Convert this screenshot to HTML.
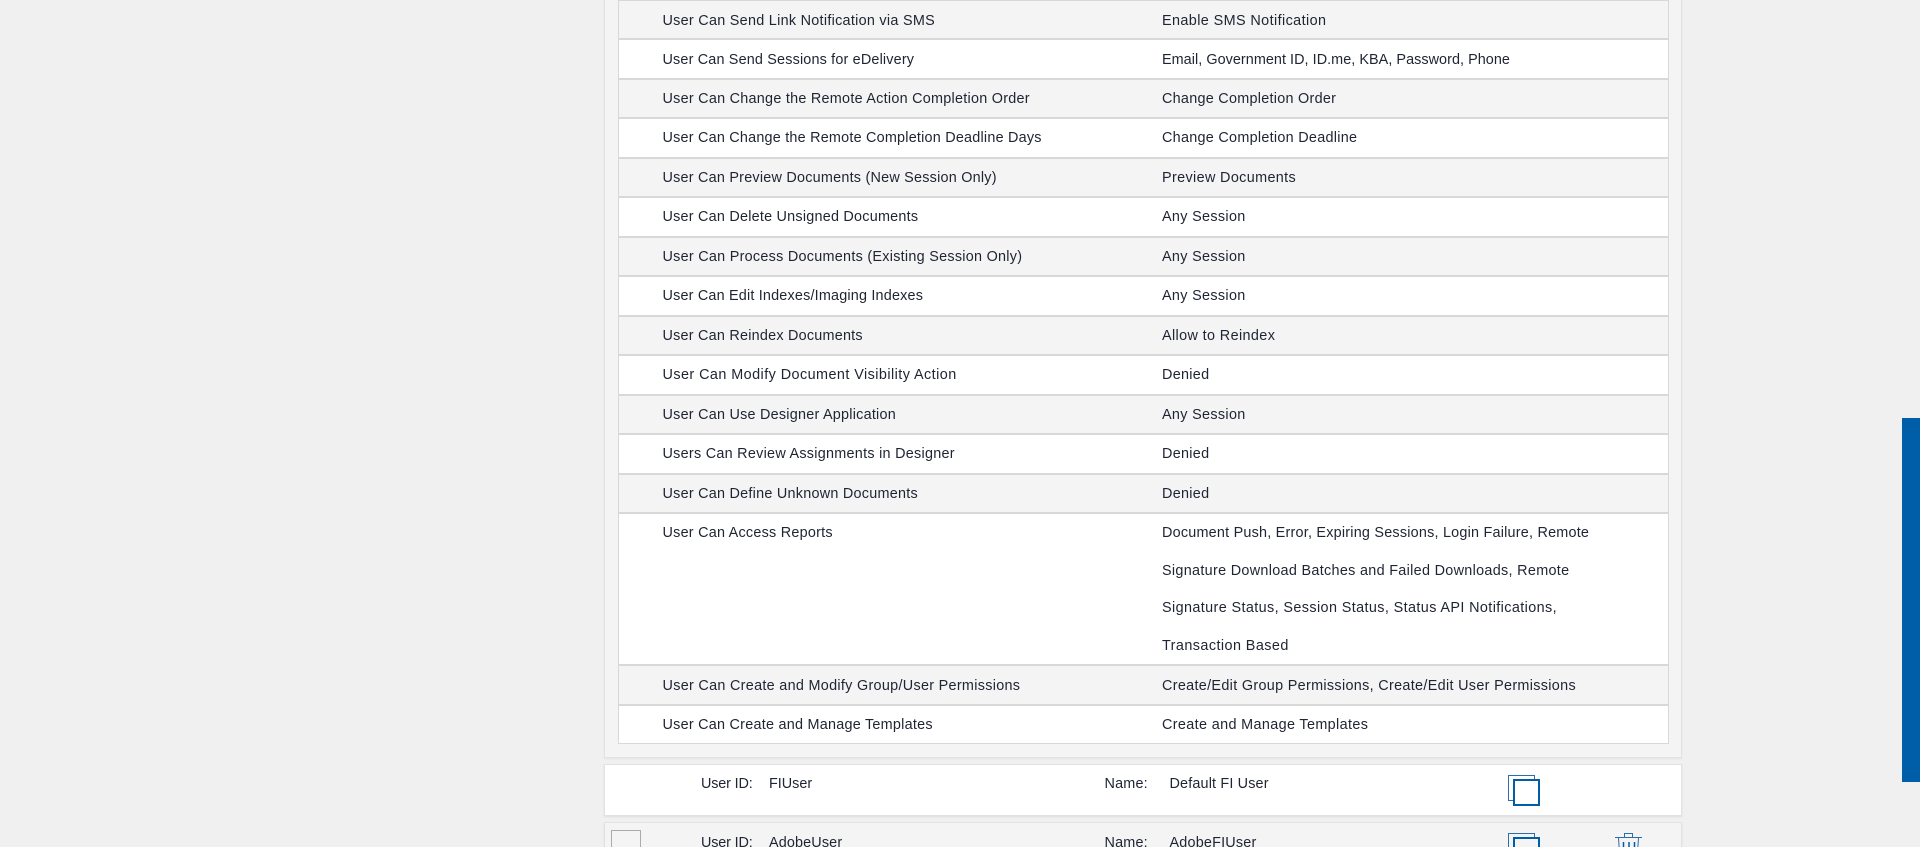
<!DOCTYPE html>
<html><head><meta charset="utf-8">
<style>
html,body{margin:0;padding:0;width:1920px;height:847px;overflow:hidden;background:#f0f0f0}
*{box-sizing:border-box}
body{font:14.4px "Liberation Sans",Arial,sans-serif;color:#1f2433;position:relative}
.abs,.r,.t{position:absolute}
.panel{left:604px;top:-4px;width:1078px;height:762px;background:#f4f4f4;border:1px solid #e2e2e2;box-shadow:0 1px 2px rgba(0,0,0,.06)}
.r{left:618px;width:1051px;border-left:1px solid #d8d8d8;border-right:1px solid #d8d8d8;border-bottom:2px solid #d8d8d8}
.g{background:#f4f4f4}.w{background:#fff}
.t{white-space:nowrap;line-height:18px}
.a{left:662.5px}.b{left:1162px}
.card{left:604px;width:1078px;border:1px solid #e2e2e2;box-shadow:0 1px 2px rgba(0,0,0,.08)}
</style></head><body>
<div class="abs panel"></div>
<div class="r g" style="top:0;height:40px;border-top:1px solid #d8d8d8"></div>
<div class="r w" style="top:40px;height:39.5px"></div>
<div class="r g" style="top:79.5px;height:39.5px"></div>
<div class="r w" style="top:119px;height:39.5px"></div>
<div class="r g" style="top:158.5px;height:39.5px"></div>
<div class="r w" style="top:198px;height:39.5px"></div>
<div class="r g" style="top:237.5px;height:39.5px"></div>
<div class="r w" style="top:277px;height:39.5px"></div>
<div class="r g" style="top:316.5px;height:39.5px"></div>
<div class="r w" style="top:356px;height:39.5px"></div>
<div class="r g" style="top:395.5px;height:39.5px"></div>
<div class="r w" style="top:435px;height:39.5px"></div>
<div class="r g" style="top:474.5px;height:39.5px"></div>
<div class="r w" style="top:514px;height:152px"></div>
<div class="r g" style="top:666px;height:40px"></div>
<div class="r w" style="top:706px;height:38px;border-bottom:1px solid #d8d8d8"></div>

<div class="t a" style="top:12px;letter-spacing:.28px">User Can Send Link Notification via SMS</div><div class="t b" style="top:12px;letter-spacing:.4px">Enable SMS Notification</div>
<div class="t a" style="top:51px;letter-spacing:.17px">User Can Send Sessions for eDelivery</div><div class="t b" style="top:51px;letter-spacing:.05px">Email, Government ID, ID.me, KBA, Password, Phone</div>
<div class="t a" style="top:90px;letter-spacing:.26px">User Can Change the Remote Action Completion Order</div><div class="t b" style="top:90px;letter-spacing:.27px">Change Completion Order</div>
<div class="t a" style="top:129px;letter-spacing:.22px">User Can Change the Remote Completion Deadline Days</div><div class="t b" style="top:129px;letter-spacing:.28px">Change Completion Deadline</div>
<div class="t a" style="top:169px;letter-spacing:.23px">User Can Preview Documents (New Session Only)</div><div class="t b" style="top:169px;letter-spacing:.36px">Preview Documents</div>
<div class="t a" style="top:208px;letter-spacing:.23px">User Can Delete Unsigned Documents</div><div class="t b" style="top:208px;letter-spacing:.33px">Any Session</div>
<div class="t a" style="top:248px;letter-spacing:.27px">User Can Process Documents (Existing Session Only)</div><div class="t b" style="top:248px;letter-spacing:.33px">Any Session</div>
<div class="t a" style="top:287px;letter-spacing:.19px">User Can Edit Indexes/Imaging Indexes</div><div class="t b" style="top:287px;letter-spacing:.33px">Any Session</div>
<div class="t a" style="top:327px;letter-spacing:.23px">User Can Reindex Documents</div><div class="t b" style="top:327px;letter-spacing:.38px">Allow to Reindex</div>
<div class="t a" style="top:366px;letter-spacing:.44px">User Can Modify Document Visibility Action</div><div class="t b" style="top:366px;letter-spacing:.3px">Denied</div>
<div class="t a" style="top:406px;letter-spacing:.24px">User Can Use Designer Application</div><div class="t b" style="top:406px;letter-spacing:.33px">Any Session</div>
<div class="t a" style="top:445px;letter-spacing:.27px">Users Can Review Assignments in Designer</div><div class="t b" style="top:445px;letter-spacing:.3px">Denied</div>
<div class="t a" style="top:485px;letter-spacing:.25px">User Can Define Unknown Documents</div><div class="t b" style="top:485px;letter-spacing:.3px">Denied</div>
<div class="t a" style="top:524px;letter-spacing:.24px">User Can Access Reports</div>
<div class="t b" style="top:524px;letter-spacing:.22px">Document Push, Error, Expiring Sessions, Login Failure, Remote</div>
<div class="t b" style="top:562px;letter-spacing:.31px">Signature Download Batches and Failed Downloads, Remote</div>
<div class="t b" style="top:599px;letter-spacing:.39px">Signature Status, Session Status, Status API Notifications,</div>
<div class="t b" style="top:637px;letter-spacing:.43px">Transaction Based</div>
<div class="t a" style="top:677px;letter-spacing:.3px">User Can Create and Modify Group/User Permissions</div><div class="t b" style="top:677px;letter-spacing:.32px">Create/Edit Group Permissions, Create/Edit User Permissions</div>
<div class="t a" style="top:716px;letter-spacing:.25px">User Can Create and Manage Templates</div><div class="t b" style="top:716px;letter-spacing:.36px">Create and Manage Templates</div>

<div class="abs card" style="top:764px;height:52px;background:#fff"></div>
<div class="abs card" style="top:822px;height:40px;background:#f4f4f4"></div>
<div class="t" style="left:701px;top:775px;letter-spacing:-.15px">User ID:</div><div class="t" style="left:769px;top:775px">FIUser</div>
<div class="t" style="left:1104.500px;top:775px;letter-spacing:.2px">Name:</div><div class="t" style="left:1169.500px;top:775px;letter-spacing:.16px">Default FI User</div>
<div class="t" style="left:701px;top:834px;letter-spacing:-.15px">User ID:</div><div class="t" style="left:769px;top:834px;letter-spacing:.14px">AdobeUser</div>
<div class="t" style="left:1104.500px;top:834px;letter-spacing:.2px">Name:</div><div class="t" style="left:1169.500px;top:834px;letter-spacing:.2px">AdobeFIUser</div>
<div class="abs" style="left:611px;top:830px;width:30px;height:30px;border:1px solid #aaa;background:#f4f4f4"></div>

<svg class="abs" style="left:0;top:0" width="1920" height="847" fill="none">
<g stroke="#2f6ca8" stroke-width="1">
<path d="M1513.500 800.500H1508.500V775.500H1534.500V779.500"/>
<path d="M1508.500 858V833.500H1534.500V838"/>
</g>
<rect x="1514" y="780" width="25" height="25" stroke="#005ea8" stroke-width="2"/>
<rect x="1514" y="838" width="25" height="25" stroke="#005ea8" stroke-width="2"/>
<g stroke="#2f6ca8" stroke-width="1">
<path d="M1615 837.500H1642"/>
<path d="M1624.500 837V833.500H1632.500V837"/>
<path d="M1618.500 838L1620 860M1638.500 838L1637 860"/>
</g>
<g stroke="#005ea8" stroke-width="1.500">
<path d="M1623.500 842V860M1629 842V860M1634.500 842V860"/>
</g>
</svg>
<div class="abs" style="left:1902px;top:418px;width:18px;height:364px;background:#005ea8"></div>
</body></html>
